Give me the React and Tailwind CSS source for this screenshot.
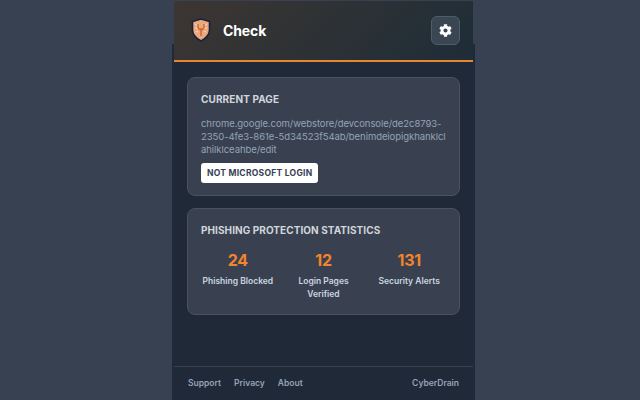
import React from "react";
import { FaCog } from "react-icons/fa";

function Shield() {
  return (
    <svg width="20" height="24" viewBox="0 0 20 24">
      <path d="M10 1 L18.500 3.500 V12 C18.500 17 14.500 20.500 10 23 C5.500 20.500 1.500 17 1.500 12 V3.500 Z" fill="#eba97f" stroke="#16233f" strokeWidth="1.600" />
      <path d="M4 6 L7 8 M16 6 L13 8 M4 10 L7 10 M16 10 L13 10 M5 14 L7 13 M15 14 L13 13" fill="none" stroke="#f9dcc6" strokeWidth="1" />
      <path d="M10 10 V18 M7 6 V9 C7 10.500 8.500 11.500 10 12 C11.500 11.500 13 10.500 13 9 V6" fill="none" stroke="#cf6a32" strokeWidth="1.500" />
    </svg>
  );
}

function Stat({ n, label }) {
  return (
    <div className="flex flex-col items-center text-center">
      <div className="text-[16px] leading-[22px] font-bold tracking-[-0.3px] text-[#f5822d]">{n}</div>
      <div className="mt-[4px] text-[8.500px] leading-[13px] font-semibold text-[#cbd5e1]">{label}</div>
    </div>
  );
}

export default function App() {
  return (
    <div className="h-[400px] w-[640px] overflow-hidden bg-[#374151] font-['Inter',sans-serif]">
      <div className="ml-[172px] flex h-[400px] w-[303px] flex-col bg-[linear-gradient(to_bottom,transparent_44px,#202937_44px)]">
        <header className="mx-[2px] mt-[1px] flex h-[61px] items-center justify-between border-b-2 border-[#e8862f] bg-[linear-gradient(135deg,#3d3632,#1e2d38)] pb-[1px] pl-[17px] pr-[13px]">
          <div className="flex items-center gap-[12px]">
            <Shield />
            <span className="text-[14px] font-bold tracking-[-0.1px] text-white">Check</span>
          </div>
          <button className="flex h-[29px] w-[29px] items-center justify-center rounded-[6px] border border-[#4f5d6b] bg-[#3a4753]">
            <FaCog size={13} className="text-white" />
          </button>
        </header>
        <main className="flex flex-1 flex-col gap-[12px] px-[15px] pt-[15px]">
          <section className="h-[119px] rounded-[8px] border border-[#4a5261] bg-[#394150] px-[13px] pt-[14px]">
            <h2 className="text-[10px] leading-[14px] font-bold tracking-[0.1px] text-[#d1d5db]">CURRENT PAGE</h2>
            <p className="mt-[11px] text-[9.500px] leading-[13px] tracking-[-0.06px] whitespace-nowrap text-[#94a3b8]">chrome.google.com/webstore/devconsole/de2c8793-<br />2350-4fe3-861e-5d34523f54ab/benimdeiopigkhanklcl<br />ahilklceahbe/edit</p>
            <button className="mt-[7px] h-[20px] rounded-[3px] bg-white px-[6px] text-[8.500px] leading-[13px] font-bold tracking-[0.27px] text-[#374151]">NOT MICROSOFT LOGIN</button>
          </section>
          <section className="h-[107px] rounded-[8px] border border-[#4a5261] bg-[#394150] px-[13px] pt-[14px]">
            <h2 className="text-[10px] leading-[14px] font-bold tracking-[0.07px] text-[#d1d5db]">PHISHING PROTECTION STATISTICS</h2>
            <div className="mt-[12px] grid grid-cols-3 gap-[12px]">
              <Stat n="24" label="Phishing Blocked" />
              <Stat n="12" label={<>Login Pages<br />Verified</>} />
              <Stat n="131" label="Security Alerts" />
            </div>
          </section>
        </main>
        <footer className="mx-[2px] flex h-[34px] items-center justify-between border-t border-[#374151] px-[14px] text-[8.500px] font-semibold text-[#94a3b8]">
          <div className="flex gap-[13px]"><span>Support</span><span>Privacy</span><span>About</span></div>
          <span>CyberDrain</span>
        </footer>
      </div>
    </div>
  );
}
